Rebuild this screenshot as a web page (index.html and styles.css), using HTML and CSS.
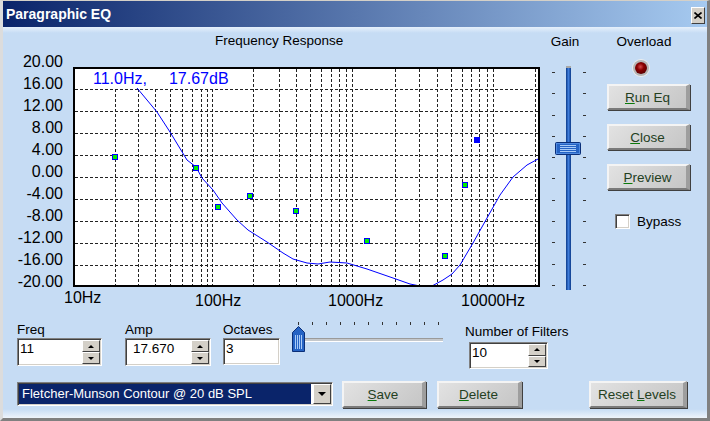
FILE: index.html
```html
<!DOCTYPE html>
<html lang="en">
<head>
  <meta charset="UTF-8" />
  <title>Paragraphic EQ</title>
  <link rel="stylesheet" href="styles.css">
</head>
<body>
  <div class="window">
    <div class="titlebar">
      <span class="title">Paragraphic EQ</span>
      <button class="close-btn" aria-label="Close">
        <svg width="8" height="7" viewBox="0 0 8 7"><path d="M0.5 0.5L7.5 6.5M7.5 0.5L0.5 6.5" stroke="#000" stroke-width="1.6"/></svg>
      </button>
    </div>

    <div class="client">
      <div class="top">
        <section class="chart-panel">
          <div class="chart-title">Frequency Response</div>
          <div class="chart-body">
            <div class="y-axis">
              <span>20.00</span><span>16.00</span><span>12.00</span><span>8.00</span>
              <span>4.00</span><span>0.00</span><span>-4.00</span><span>-8.00</span>
              <span>-12.00</span><span>-16.00</span><span>-20.00</span>
            </div>
            <div class="plot">
              <svg width="467" height="220" viewBox="73 67 467 220">
                <rect x="73" y="67" width="467" height="220" fill="#fff"/>
                <g stroke="#222" stroke-width="1" stroke-dasharray="3 2" shape-rendering="crispEdges" fill="none">
                  <path d="M75 89.5H538M75 111.5H538M75 133.5H538M75 155.5H538M75 177.5H538M75 199.5H538M75 221.5H538M75 243.5H538M75 265.5H538"/>
                  <!-- 20Hz .. 100Hz -->
                  <path d="M115.5 69V285M138.5 69V285M155.5 69V285M170.5 69V285M182.5 69V285M192.5 69V285M201.5 69V285M207.5 69V285M212.5 69V285"/>
                  <!-- 200Hz .. 1kHz -->
                  <path d="M253.5 69V285M279.5 69V285M296.5 69V285M310.5 69V285M321.5 69V285M331.5 69V285M339.5 69V285M346.5 69V285M352.5 69V285"/>
                  <!-- 2kHz .. 20kHz -->
                  <path d="M395.5 69V285M419.5 69V285M437.5 69V285M451.5 69V285M462.5 69V285M471.5 69V285M479.5 69V285M487.5 69V285M493.5 69V285M535.5 69V285"/>
                </g>
                <polyline fill="none" stroke="#00f" stroke-width="1"
                  points="137,88 157,112 170,132 187,160 196,167 202,178 213,190 222,203 237,220 248,230 267,242 283,253 293,259 307,263 318,264 330,262 347,263 367,269 393,278 410,284 420,286 432,286 443,280 452,274 460,265 473,243 487,218 500,195 513,177 527,165 538,159"/>
                <g fill="#00ee00" stroke="#00f" stroke-width="1">
                  <rect x="112.5" y="154.5" width="5" height="5"/>
                  <rect x="193.5" y="165.5" width="5" height="5"/>
                  <rect x="215.5" y="204.5" width="5" height="5"/>
                  <rect x="247.5" y="193.5" width="5" height="5"/>
                  <rect x="293.5" y="208.5" width="5" height="5"/>
                  <rect x="364.5" y="238.5" width="5" height="5"/>
                  <rect x="442.5" y="253.5" width="5" height="5"/>
                  <rect x="462.5" y="182.5" width="5" height="5"/>
                </g>
                <rect x="474" y="137" width="6" height="6" fill="#00f"/>
                <rect x="74" y="68" width="465" height="218" fill="none" stroke="#000" stroke-width="2"/>
              </svg>
              <div class="readout"><span>11.0Hz,</span><span class="readout-db">17.67dB</span></div>
            </div>
          </div>
          <div class="x-axis">
            <span class="x-label low" style="left:61px">10Hz</span>
            <span class="x-label" style="left:192px">100Hz</span>
            <span class="x-label" style="left:325px">1000Hz</span>
            <span class="x-label" style="left:458px">10000Hz</span>
          </div>
        </section>

        <section class="gain-panel">
          <div class="panel-title">Gain</div>
          <div class="gain-slider">
            <div class="gain-ticks"><i></i><i></i><i></i><i></i><i></i><i></i><i></i><i></i><i></i><i></i><i></i></div>
            <div class="gain-track"></div>
            <div class="gain-ticks right"><i></i><i></i><i></i><i></i><i></i><i></i><i></i><i></i><i></i><i></i><i></i></div>
            <svg class="gain-thumb" width="26" height="13" viewBox="0 0 26 13">
              <rect x="0.5" y="0.5" width="25" height="12" rx="1" fill="#2563c4" stroke="#0b2f78"/>
              <rect x="1.5" y="1.5" width="23" height="10" fill="none" stroke="#4f8ae0"/>
              <path d="M5 3.5H21M5 5.5H21M5 7.5H21M5 9.5H21" stroke="#a9cbf7"/>
            </svg>
          </div>
        </section>

        <section class="side-panel">
          <div class="panel-title overload-title">Overload</div>
          <div class="led"></div>
          <button class="btn side-btn first"><u>R</u>un Eq</button>
          <button class="btn side-btn"><u>C</u>lose</button>
          <button class="btn side-btn"><u>P</u>review</button>
          <label class="bypass"><span class="checkbox"></span>Bypass</label>
        </section>
      </div>

      <div class="controls">
        <div class="field field-freq">
          <label>Freq</label>
          <div class="spin">
            <span class="spin-value">11</span>
            <span class="spin-btns"><span class="spin-btn"><b class="tri-up"></b></span><span class="spin-btn"><b class="tri-down"></b></span></span>
          </div>
        </div>
        <div class="field field-amp">
          <label>Amp</label>
          <div class="spin">
            <span class="spin-value">17.670</span>
            <span class="spin-btns"><span class="spin-btn"><b class="tri-up"></b></span><span class="spin-btn"><b class="tri-down"></b></span></span>
          </div>
        </div>
        <div class="field field-oct">
          <label>Octaves</label>
          <div class="spin"><span class="spin-value">3</span></div>
        </div>
        <div class="oct-slider">
          <div class="oct-ticks"><i></i><i></i><i></i><i></i><i></i><i></i><i></i><i></i><i></i><i></i><i></i></div>
          <div class="oct-row">
            <svg class="oct-thumb" width="13" height="26" viewBox="0 0 13 26">
              <path d="M6.5 0.5L12.5 6.5V25.5H0.5V6.5Z" fill="#2563c4" stroke="#0b2f78"/>
              <path d="M3.5 9V23M5.5 9V23M7.5 9V23M9.5 9V23" stroke="#a9cbf7"/>
            </svg>
            <div class="oct-track"></div>
          </div>
        </div>
        <div class="field field-filters">
          <label>Number of Filters</label>
          <div class="spin">
            <span class="spin-value">10</span>
            <span class="spin-btns"><span class="spin-btn"><b class="tri-up"></b></span><span class="spin-btn"><b class="tri-down"></b></span></span>
          </div>
        </div>
      </div>

      <div class="actions">
        <div class="dropdown">
          <span class="dd-value">Fletcher-Munson Contour @ 20 dB SPL</span>
          <span class="dd-btn"><b class="tri-down big"></b></span>
        </div>
        <button class="btn btn-save"><u>S</u>ave</button>
        <button class="btn btn-delete"><u>D</u>elete</button>
        <button class="btn btn-reset">Reset <u>L</u>evels</button>
      </div>
    </div>
  </div>
</body>
</html>
```

FILE: styles.css
```css
:root {
  --face: #c6dcf4;
  --navy: #0a246a;
  --gray: #d4d0c8;
  --btn-text: #24401f;
}
body {
  margin: 0; font-family: "Liberation Sans", Arial, sans-serif; background: var(--face); color: #000;
}
.window {
  width: 710px; height: 421px; box-sizing: border-box; display: flex; flex-direction: column;
  border-style: solid; border-width: 1px 3px 3px 3px;
  border-color: #d4d0c8 #808080 #808080 #dcdcdc;
}
.titlebar {
  height: 26px; flex-shrink: 0; display: flex; align-items: center; justify-content: space-between;
  padding: 0 2px 0 3px; background: linear-gradient(to right, #0a246a, #a6caf0);
}
.title { color: #fff; font-weight: bold; font-size: 14px; }
.close-btn {
  width: 14px; height: 17px; padding: 0; margin-top: 3px; background: var(--gray);
  border: 1px solid; border-color: #fff #404040 #404040 #fff;
  display: flex; align-items: center; justify-content: center;
}
.close-btn svg { display: block; }
.client {
  flex: 1;
  background: linear-gradient(to bottom, #e6f0fb 0, var(--face) 6px, var(--face) calc(100% - 9px), #eef4fb 100%);
}

/* chart */
.top { display: flex; height: 284px; }
.chart-panel { width: 538px; flex-shrink: 0; }
.chart-title { margin-top: 3px; height: 22px; line-height: 22px; padding-left: 212px; font-size: 13.5px; }
.chart-body { display: flex; height: 220px; margin-top: 15px; }
.y-axis {
  width: 60px; padding-right: 10px; margin-top: -16px; display: flex; flex-direction: column;
  text-align: right; font-size: 16px;
}
.y-axis span { height: 22px; line-height: 22px; flex-shrink: 0; }
.plot { position: relative; width: 467px; height: 220px; }
.plot svg { display: block; }
.readout {
  position: absolute; left: 2px; top: 2px; width: 176px; height: 19px; box-sizing: border-box;
  padding-left: 18px; background: #fff; color: #00f; font-size: 16px; line-height: 19px; white-space: nowrap;
}
.readout-db { margin-left: 22px; }
.x-axis { position: relative; height: 24px; font-size: 16px; }
.x-label { position: absolute; top: 5px; line-height: 18px; }
.x-label.low { top: 2px; }

/* gain */
.gain-panel { width: 48px; flex-shrink: 0; }
.panel-title { margin-top: 4px; height: 22px; line-height: 22px; text-align: center; font-size: 13.5px; }
.gain-slider { position: relative; display: flex; height: 224px; margin: 13px 0 0 9px; }
.gain-ticks {
  width: 3px; height: 214px; margin: 6px 0 0 2px;
  display: flex; flex-direction: column; justify-content: space-between;
}
.gain-ticks.right { margin-left: 12px; }
.gain-ticks i { display: block; height: 1px; background: #333; }
.gain-track {
  width: 5px; margin-left: 11px; border-top: 2px solid #a8a8a8;
  background: linear-gradient(to right, #0b3a8a, #3f7ddb 50%, #0b3a8a);
}
.gain-thumb { position: absolute; left: 5px; top: 76px; }

/* right column */
.side-panel { flex: 1; display: flex; flex-direction: column; align-items: flex-start; }
.overload-title { width: 110px; }
.led {
  width: 12px; height: 12px; margin: 9px 0 0 46px; border-radius: 50%;
  background: radial-gradient(circle at 45% 40%, #d84a4a 0, #8a0000 35%, #5a0000 75%);
  box-shadow: 0 0 0 2px #b4b4b4, 0 0 0 3px #ececec;
}
.btn {
  font-family: inherit; font-size: 13.5px; color: var(--btn-text); padding: 0; cursor: pointer;
  box-sizing: border-box;
  background: linear-gradient(135deg, #e2e2e2 0%, #d2d2d2 55%, #c6c6c6 100%);
  border-style: solid; border-width: 2px 4px 2px 2px;
  border-color: #f4f4f4 #9e9e9e #7a7a7a #f4f4f4;
  box-shadow: 1px 1px 0 #404040;
}
.btn u { text-decoration-color: #0a7a0a; }
.side-btn { width: 83px; height: 26px; margin: 14px 0 0 18px; }
.side-btn.first { margin-top: 10px; }
.bypass { display: flex; align-items: center; gap: 7px; margin: 24px 0 0 26px; font-size: 13.5px; }
.checkbox {
  width: 15px; height: 15px; box-sizing: border-box; background: #fff;
  border: 1px solid; border-color: #808080 #fff #fff #808080;
  box-shadow: inset 1px 1px 0 #404040, inset -1px -1px 0 var(--gray);
}

/* bottom controls */
.controls { display: flex; align-items: flex-start; height: 48px; margin-top: 10px; padding-left: 14px; }
.field label { display: block; height: 17px; line-height: 17px; font-size: 13.5px; white-space: nowrap; }
.spin {
  display: flex; height: 28px; box-sizing: border-box; padding: 1px; background: #fff;
  border: 1px solid; border-color: #808080 #fff #fff #808080;
  box-shadow: inset 1px 1px 0 #404040, inset -1px -1px 0 var(--gray);
}
.spin-value { flex: 1; padding: 1px 0 0 1px; font-size: 13.5px; line-height: 16px; }
.spin-btns { width: 18px; display: flex; flex-direction: column; }
.spin-btn {
  flex: 1; display: flex; align-items: center; justify-content: center; background: var(--gray);
  border: 1px solid; border-color: #fff #404040 #404040 #fff;
}
.tri-up { border-left: 3px solid transparent; border-right: 3px solid transparent; border-bottom: 3px solid #000; }
.tri-down { border-left: 3px solid transparent; border-right: 3px solid transparent; border-top: 3px solid #000; }
.tri-down.big { border-left-width: 4px; border-right-width: 4px; border-top-width: 4px; }
.field-freq { width: 85px; }
.field-amp { width: 86px; margin-left: 23px; }
.field-amp .spin-value { padding-left: 6px; }
.field-oct { width: 57px; margin-left: 12px; }
.field-oct .spin { height: 27px; }
.oct-slider { width: 153px; margin: 1px 0 0 12px; }
.oct-ticks { display: flex; gap: 13px; height: 3px; padding-left: 6px; }
.oct-ticks i { display: block; width: 1px; height: 3px; background: #333; }
.oct-row { display: flex; margin-top: 1px; }
.oct-thumb { display: block; }
.oct-track {
  flex: 1; height: 2px; margin: 12px 2px 0 0; background: #c4c8cc;
  border-top: 1px solid #9a9a9a; border-bottom: 1px solid #fff;
}
.field-filters { margin: 2px 0 0 20px; }
.field-filters .spin { width: 79px; height: 27px; margin: 2px 0 0 4px; }

.actions { display: flex; align-items: center; height: 28px; margin-top: 11px; padding-left: 14px; }
.dropdown {
  display: flex; width: 316px; height: 24px; box-sizing: border-box; padding: 1px; background: #fff;
  border: 1px solid; border-color: #808080 #fff #fff #808080;
  box-shadow: inset 1px 1px 0 #404040, inset -1px -1px 0 var(--gray);
}
.dd-value {
  flex: 1; background: var(--navy); color: #fff; font-size: 13px; line-height: 20px;
  padding-left: 3px; white-space: nowrap; overflow: hidden;
}
.dd-btn {
  width: 18px; margin-left: 2px; display: flex; align-items: center; justify-content: center;
  background: var(--gray); border: 1px solid; border-color: #fff #404040 #404040 #fff; box-sizing: border-box;
}
.btn-save { width: 84px; height: 27px; margin-left: 9px; }
.btn-delete { width: 85px; height: 27px; margin-left: 11px; }
.btn-reset { width: 98px; height: 27px; margin-left: 67px; }
```
